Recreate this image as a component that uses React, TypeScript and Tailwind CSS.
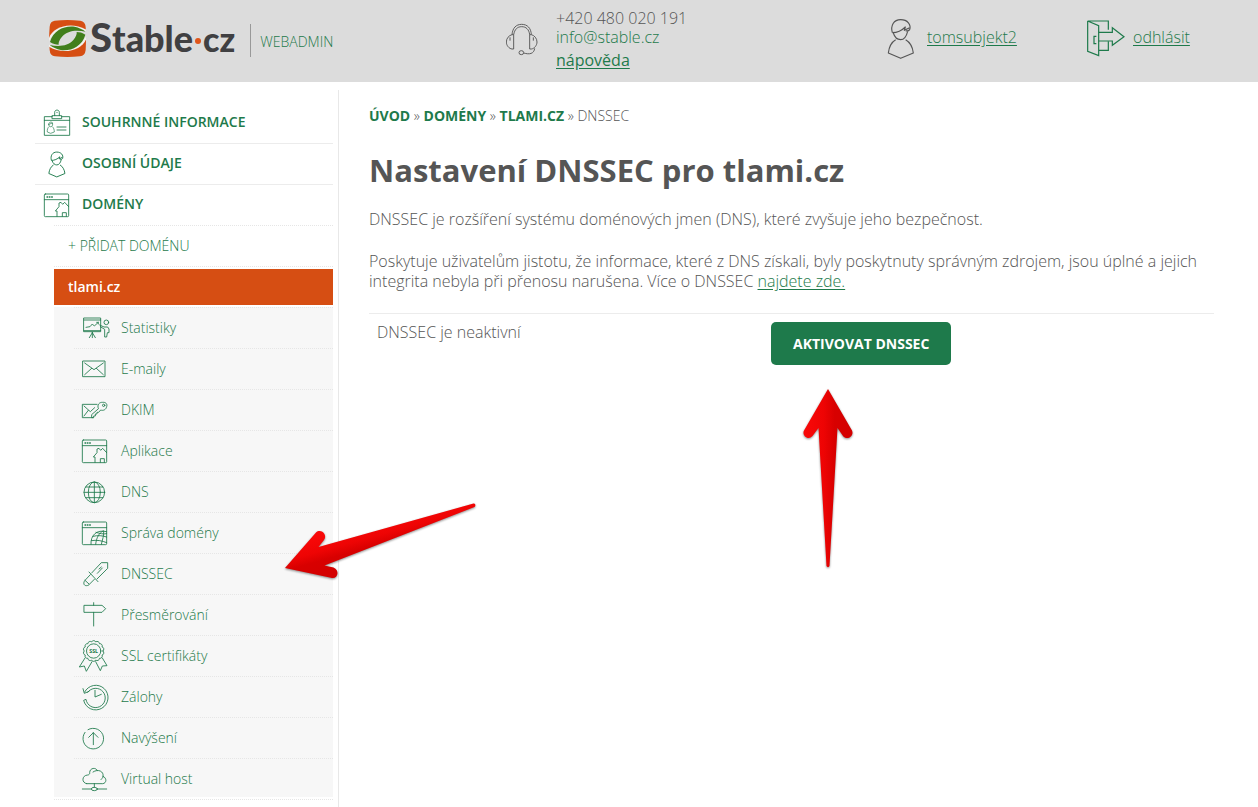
import type { ReactNode } from "react";

const GREEN = "#1e7a4b";
const GREY = "#555555";

function Icon({ children }: { children: ReactNode }) {
  return (
    <svg
      aria-hidden
      viewBox="0 0 96 108"
      className="h-9 w-8 shrink-0 overflow-visible"
      fill="none"
      stroke={GREEN}
      strokeWidth={2.6}
      strokeLinejoin="round"
      strokeLinecap="round"
    >
      {children}
    </svg>
  );
}

function scallop(cx: number, cy: number, r: number, count: number) {
  const point = (i: number) => {
    const a = (i / count) * Math.PI * 2;
    return `${(cx + r * Math.cos(a)).toFixed(2)} ${(cy + r * Math.sin(a)).toFixed(2)}`;
  };
  let d = `M${point(0)}`;
  for (let i = 1; i <= count; i++) d += ` A7 7 0 0 1 ${point(i)}`;
  return `${d}Z`;
}

function PersonPaths() {
  return (
    <>
      <path d="M66 82C60 61 70 43 91 43C112 43 123 58 118 73C115 77 112 78 106 76" />
      <path d="M66 82C80 82 94 76 105 65L102 75L118 67" />
      <path d="M69 83C73 96 82 103 91 103C101 103 108 94 112 78" />
      <path d="M76 103C64 110 56 125 54 143L91 159L129 143C127 125 118 110 106 103" />
    </>
  );
}

function BrowserFrame() {
  return (
    <>
      <rect x="10" y="21" width="73" height="68" rx="3" />
      <path d="M10 38H83" />
      <path d="M18 30h2M25 30h2M32 30h2" strokeWidth={4} />
    </>
  );
}

function HouseWindowIcon() {
  return (
    <Icon>
      <BrowserFrame />
      <path d="M48 88V72H43L54 59V48L60 46L65 52L71 46L83 59M64 88V77H76V88" />
    </Icon>
  );
}

const CardIcon = () => (
  <Icon>
    <path d="M34 35H10V91H86V35H62M10 46H86" />
    <path d="M34 32H62V41H34ZM41 32V22C41 13 55 13 55 22V32M48 22v1" />
    <path d="M23 58C23 49 35 49 35 57C35 68 23 68 23 58M24 58L34 54M24 65C20 68 18 74 19 81L29 85L40 81C40 74 38 68 34 65" strokeWidth={2} />
    <path d="M48 66H75M48 75H75" />
  </Icon>
);

const PersonIcon = () => (
  <span className="flex h-9 w-8 shrink-0 items-center justify-center">
    <svg aria-hidden viewBox="50 38 84 126" className="h-[27px] w-[18px]" fill="none" stroke={GREEN} strokeWidth={4.4} strokeLinejoin="round">
      <PersonPaths />
    </svg>
  </span>
);

const subItems: { label: string; icon: ReactNode }[] = [
  {
    label: "Statistiky",
    icon: (
      <Icon>
        <path d="M15 24H65V65H15ZM15 30H65M15 62H65" />
        <path d="M21 52L33 50L40 42L46 48L58 37M53 37h5v5" />
        <path d="M40 67V83M40 68L31 83M40 68L49 83" />
        <circle cx="82" cy="37" r="7" />
        <path d="M62 45L75 51H86L90 57V68H85L83 81H77V58L64 50" />
      </Icon>
    ),
  },
  {
    label: "E-maily",
    icon: (
      <Icon>
        <rect x="12" y="30" width="66" height="47" />
        <path d="M17 36L45 56L73 36M17 71L38 52M73 71L52 52" />
      </Icon>
    ),
  },
  {
    label: "DKIM",
    icon: (
      <Icon>
        <path d="M54 37H10V77H42M15 42L34 59L47 47M15 72L28 55" />
        <path d="M58 49C53 38 62 30 71 31C80 30 86 36 83 44C81 53 73 57 65 54L59 61H54V66H49V72H44V77H38V69Z" />
        <circle cx="74" cy="40" r="3.5" />
      </Icon>
    ),
  },
  { label: "Aplikace", icon: <HouseWindowIcon /> },
  {
    label: "DNS",
    icon: (
      <Icon>
        <circle cx="46" cy="55" r="31" />
        <ellipse cx="46" cy="55" rx="18" ry="31" />
        <path d="M46 24V86M15 55H77M20 39H72M20 71H72" />
      </Icon>
    ),
  },
  {
    label: "Správa domény",
    icon: (
      <Icon>
        <BrowserFrame />
        <path d="M36 88C34 62 52 42 83 50M50 88C52 68 60 54 72 48M67 88C70 74 76 60 74 48M42 64C56 60 72 62 83 66M37 77C52 74 70 77 83 83M51 52C62 56 74 58 83 56" />
      </Icon>
    ),
  },
  {
    label: "DNSSEC",
    icon: (
      <Icon>
        <path d="M38 51L67 20H86V37L54 69M30 48L57 77M70 36L55 52M60 39L67 33" />
        <path d="M34 56L18 73C12 80 14 89 22 89C27 89 30 87 32 84L46 70M18 73L30 84" />
      </Icon>
    ),
  },
  {
    label: "Přesměrování",
    icon: (
      <Icon>
        <path d="M16 25H69L80 35L69 46H16ZM44 17V25M44 46V87" />
      </Icon>
    ),
  },
  {
    label: "SSL certifikáty",
    icon: (
      <Icon>
        <path d={scallop(44, 39, 28, 14)} />
        <circle cx="44" cy="39" r="21.5" />
        <text x="44" y="45" textAnchor="middle" fontSize="16" fontWeight="700" fontFamily="Open Sans, sans-serif" fill={GREEN} stroke="none">
          SSL
        </text>
        <path d="M18 60L1 87L16 84L22 100L39 71M70 60L84 83L70 84L64 98L50 71" />
      </Icon>
    ),
  },
  {
    label: "Zálohy",
    icon: (
      <Icon>
        <path d="M17 39A37 37 0 1 1 14 64L21 61A29 29 0 1 0 26 40" />
        <path d="M12 29L16 43L30 37M48 34V54L67 46" />
      </Icon>
    ),
  },
  {
    label: "Navýšení",
    icon: (
      <Icon>
        <path d="M27 29A31 31 0 1 1 18 37" />
        <path d="M43 74V38M29 52L43 38L57 52" />
      </Icon>
    ),
  },
  {
    label: "Virtual host",
    icon: (
      <Icon>
        <path d="M23 68C7 66 8 43 26 42C30 42 33 38 32 35C32 20 52 18 55 29M42 33C58 22 75 32 72 46C84 51 83 67 71 68H23M72 46C72 51 69 54 66 55" />
        <path d="M46 68V79M10 84H37M55 84H83" />
        <ellipse cx="46" cy="84" rx="9" ry="5" />
      </Icon>
    ),
  },
];

function Logo() {
  return (
    <a href="#" className="flex items-center">
      <svg aria-hidden viewBox="27 30 111 111" className="h-[37px] w-[37px] shrink-0">
        <path d="M44 32Q82 28 121 32Q136 34 137 52Q139 85 137 120Q135 138 120 139Q82 143 45 139Q30 137 29 120Q26 85 29 50Q30 34 44 32Z" fill="#d64e13" />
        <path d="M26 88C34 52 92 32 140 60V82C132 118 74 138 26 110Z" fill="#f1f1ec" />
        <path d="M26 96C40 60 90 46 140 66V75C126 112 76 124 26 104Z" fill="#dcdcdc" />
        <path d="M30 96C40 60 74 46 104 50C116 52 128 58 137 65C108 59 82 62 66 80C58 90 55 97 56 104C48 104 38 102 30 96Z" fill="#417f1c" />
        <path d="M136 74C126 110 92 124 62 120C50 118 38 112 29 105C58 111 84 108 100 90C108 80 111 73 110 66C118 66 128 68 136 74Z" fill="#417f1c" />
      </svg>
      <span className="flex items-baseline pl-1 font-['Lato'] text-[36px] leading-9 font-black text-[#404042]">
        <span className="text-[40px]">S</span>
        <span>table</span>
        <span className="mx-0.5 size-[6px] -translate-y-2 rounded-full bg-[#e0561b]" />
        <span className="text-[34px]">cz</span>
      </span>
    </a>
  );
}

function Header() {
  return (
    <header className="grid h-[82px] grid-cols-[457fr_381fr_200fr_171fr] bg-[#dcdcdc] pl-[49px] text-[#555]">
      <div className="flex items-center self-start pt-[19px]">
        <Logo />
        <span className="mt-1 ml-[15px] border-l border-[#999] pt-[10px] pb-[7px] pl-[9px] text-[14px] leading-4 font-light text-[#1e7a4b]">WEBADMIN</span>
      </div>
      <div className="flex gap-[18px] pt-[9px]">
        <svg aria-hidden viewBox="48 69 96 102" className="mt-3.5 h-[34px] w-8" fill="none" stroke={GREY} strokeWidth={2.8} strokeLinejoin="round">
          <path d="M66 104C68 84 78 73 95 73C112 73 123 84 124 104M71 104C74 88 82 80 95 80C108 80 117 88 119 104" />
          <path d="M66 104H71V147H66C57 146 49 136 49 126C49 115 57 106 66 104ZM124 104H119V147H124C133 146 141 136 141 126C141 115 133 106 124 104ZM60 112V122M130 112V122" />
          <ellipse cx="94" cy="158" rx="7" ry="6" />
          <path d="M101 159C118 164 132 162 134 145" />
        </svg>
        <div className="text-[16px] leading-[19px] font-light">
          <div>+420 480 020 191</div>
          <a href="mailto:info@stable.cz" className="block text-[#1e7a4b]">info@stable.cz</a>
          <a href="#" className="mt-1 block font-normal text-[#1e7a4b] underline underline-offset-2">nápověda</a>
        </div>
      </div>
      <div className="flex items-start gap-3 pt-[18px]">
        <svg aria-hidden viewBox="50 38 84 126" className="h-[42px] w-7" fill="none" stroke={GREY} strokeWidth={3.4} strokeLinejoin="round">
          <PersonPaths />
        </svg>
        <a href="#" className="pt-[9px] text-[16px] leading-5 font-light text-[#1e7a4b] underline underline-offset-2">tomsubjekt2</a>
      </div>
      <div className="flex items-start gap-2 pt-5">
        <svg aria-hidden viewBox="650 46 114 111" className="h-[37px] w-[38px]" fill="none" stroke={GREEN} strokeWidth={3.6}>
          <path d="M714 75V49H652L685 63V153L652 140V49M714 110V137H685M678 95H671V117H678" />
          <path d="M685 83H726V69L761 96L726 122V109H685" />
        </svg>
        <a href="#" className="pt-[7px] text-[16px] leading-5 font-light text-[#1e7a4b] underline underline-offset-2">odhlásit</a>
      </div>
    </header>
  );
}

function TopItem({ icon, label }: { icon: ReactNode; label: string }) {
  return (
    <a href="#" className="flex h-10 items-center gap-[9px] pl-1.5 text-[14px] leading-5 font-semibold">
      {icon}
      <span className="pb-0.5">{label}</span>
    </a>
  );
}

function Sidebar() {
  return (
    <nav className="mt-2 w-[304px] shrink-0 border-r border-[#e8e8e8] pt-[13px] pr-[5px] text-[#1e7a4b]">
      <ul>
        <li className="border-b border-[#ececec]">
          <TopItem icon={<CardIcon />} label="SOUHRNNÉ INFORMACE" />
        </li>
        <li className="border-b border-[#ececec]">
          <TopItem icon={<PersonIcon />} label="OSOBNÍ ÚDAJE" />
        </li>
        <li>
          <TopItem icon={<HouseWindowIcon />} label="DOMÉNY" />
          <ul className="ml-[19px]">
            <li className="border-y border-dotted border-[#e6e6e6]">
              <a href="#" className="flex h-10 items-center pl-[14px] text-[14px] leading-5 font-light">+ PŘIDAT DOMÉNU</a>
            </li>
            <li className="border-b border-dotted border-[#e6e6e6] py-0.5">
              <a href="#" className="flex h-9 items-center bg-[#d64e13] pl-[14px] text-[14px] leading-5 font-semibold text-white">tlami.cz</a>
              <ul className="mt-0.5 bg-[#f7f7f7] pl-5">
                {subItems.map((item) => (
                  <li key={item.label} className="h-[41px] border-t border-dotted border-[#e6e6e6] last:h-[39px]">
                    <a href="#" className="flex h-10 items-center gap-[10px] pl-[5px] text-[14px] leading-5 font-light">
                      {item.icon}
                      {item.label}
                    </a>
                  </li>
                ))}
              </ul>
            </li>
          </ul>
        </li>
      </ul>
    </nav>
  );
}

function Arrow({ d, className, box, gradient, id }: { d: string; className: string; box: string; gradient: [number, number, number, number]; id: string }) {
  return (
    <svg aria-hidden viewBox={box} className={className}>
      <defs>
        <linearGradient id={id} gradientUnits="userSpaceOnUse" x1={gradient[0]} y1={gradient[1]} x2={gradient[2]} y2={gradient[3]}>
          <stop offset="0" stopColor="#f80808" />
          <stop offset="0.4" stopColor="#ee0404" />
          <stop offset="0.65" stopColor="#d80000" />
          <stop offset="1" stopColor="#d40000" />
        </linearGradient>
      </defs>
      <path d={d} fill={`url(#${id})`} />
    </svg>
  );
}

export default function App() {
  return (
    <div className="relative flex min-h-screen flex-col overflow-hidden bg-white font-['Open_Sans','Noto_Sans',sans-serif] text-[#555]">
      <Header />
      <div className="flex grow pl-[35px]">
        <Sidebar />
        <main className="grow pt-6 pr-11 pl-[30px]">
          <nav className="text-[14px] leading-5 font-light">
            <a href="#" className="font-bold text-[#1e7a4b]">ÚVOD</a> »{" "}
            <a href="#" className="font-bold text-[#1e7a4b]">DOMÉNY</a> »{" "}
            <a href="#" className="font-bold text-[#1e7a4b]">TLAMI.CZ</a> » DNSSEC
          </nav>
          <h1 className="mt-6 text-[31px] leading-10 font-bold">Nastavení DNSSEC pro tlami.cz</h1>
          <p className="mt-[19px] text-[16px] leading-5 font-light">
            DNSSEC je rozšíření systému doménových jmen (DNS), které zvyšuje jeho bezpečnost.
          </p>
          <p className="mt-[22px] text-[16px] leading-5 font-light">
            Poskytuje uživatelům jistotu, že informace, které z DNS získali, byly poskytnuty správným zdrojem, jsou úplné a jejich integrita nebyla při přenosu narušena. Více o DNSSEC{" "}
            <a href="#" className="inline-block leading-5 text-[#1e7a4b] underline underline-offset-2">najdete zde.</a>
          </p>
          <div className="mt-[22px] grid grid-cols-[402fr_443fr] items-start border-t border-[#ececec] pt-2 text-[16px] leading-5 font-light">
            <span className="pl-2">DNSSEC je neaktivní</span>
            <button type="button" className="h-[43px] justify-self-start rounded-[5px] bg-[#1e7a4b] px-[22px] text-[14px] font-bold text-white">
              AKTIVOVAT DNSSEC
            </button>
          </div>
        </main>
      </div>
      <Arrow
        id="arrow-menu"
        box="280 498 200 85"
        className="pointer-events-none absolute top-[498px] left-[280px] h-[85px] w-[200px] drop-shadow-[0_1px_1px_rgba(0,0,0,0.45)]"
        gradient={[312, 538, 322, 574]}
        d="M285 568L316 532.5C321 528 328 535 324 540L318.500 547L473.500 503.500C475.500 503 476 506 474.500 507L324.500 565.500L333.500 567.500C340 570 338 579 332 578Z"
      />
      <Arrow
        id="arrow-button"
        box="800 385 56 188"
        className="pointer-events-none absolute top-[385px] left-[800px] h-[188px] w-14 drop-shadow-[0_1px_1px_rgba(0,0,0,0.45)]"
        gradient={[806, 430, 850, 430]}
        d="M828 389L852 430.500C854.500 436 847 441 843 436L837.500 428L829.500 566C829 567.500 827 567.500 826.500 566L818.500 428L812.500 436C808 441 801.500 435 804 430.500Z"
      />
    </div>
  );
}
